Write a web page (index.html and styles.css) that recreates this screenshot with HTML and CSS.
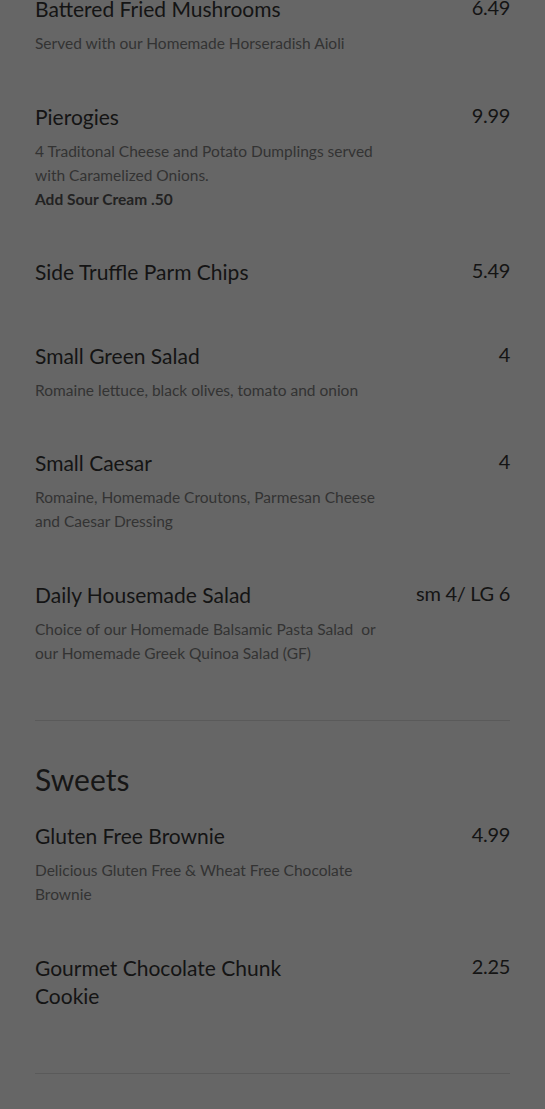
FILE: index.html
```html
<!DOCTYPE html>
<html lang="en">
<head>
  <meta charset="UTF-8">
  <title>Menu</title>
  <meta name="viewport" content="width=device-width, initial-scale=1.0">
  <link rel="stylesheet" href="styles.css">
</head>
<body>
  <div class="menu">
    <section class="section">
      <div class="item">
        <div class="item-main">
          <div class="item-name">Battered Fried Mushrooms</div>
          <div class="item-desc">Served with our Homemade Horseradish Aioli</div>
        </div>
        <div class="item-price">6.49</div>
      </div>
      <div class="item">
        <div class="item-main">
          <div class="item-name">Pierogies</div>
          <div class="item-desc">4 Traditonal Cheese and Potato Dumplings served with Caramelized Onions.<br><strong>Add Sour Cream .50</strong></div>
        </div>
        <div class="item-price">9.99</div>
      </div>
      <div class="item">
        <div class="item-main">
          <div class="item-name">Side Truffle Parm Chips</div>
          <div class="item-desc"></div>
        </div>
        <div class="item-price">5.49</div>
      </div>
      <div class="item">
        <div class="item-main">
          <div class="item-name">Small Green Salad</div>
          <div class="item-desc">Romaine lettuce, black olives, tomato and onion</div>
        </div>
        <div class="item-price">4</div>
      </div>
      <div class="item">
        <div class="item-main">
          <div class="item-name">Small Caesar</div>
          <div class="item-desc">Romaine, Homemade Croutons, Parmesan Cheese and Caesar Dressing</div>
        </div>
        <div class="item-price">4</div>
      </div>
      <div class="item">
        <div class="item-main">
          <div class="item-name">Daily Housemade Salad</div>
          <div class="item-desc">Choice of our Homemade Balsamic Pasta Salad &nbsp;or our Homemade Greek Quinoa Salad (GF)</div>
        </div>
        <div class="item-price">sm 4/ LG 6</div>
      </div>
    </section>

    <section class="section">
      <h2 class="section-title">Sweets</h2>
      <div class="item">
        <div class="item-main">
          <div class="item-name">Gluten Free Brownie</div>
          <div class="item-desc">Delicious Gluten Free &amp; Wheat Free Chocolate Brownie</div>
        </div>
        <div class="item-price">4.99</div>
      </div>
      <div class="item">
        <div class="item-main">
          <div class="item-name">Gourmet Chocolate Chunk Cookie</div>
          <div class="item-desc"></div>
        </div>
        <div class="item-price">2.25</div>
      </div>
    </section>
  </div>
</body>
</html>
```

FILE: styles.css
```css
* { box-sizing: border-box; }
body {
  margin: 0;
  background: #666666;
  font-family: Lato, "Open Sans", sans-serif;
  color: #141414;
}
.menu {
  margin-top: -5px;
  padding: 0 35px;
}
.section {
  padding-bottom: 8px;
  border-bottom: 1px solid #5a5a5a;
}
.section + .section { padding-top: 40px; }
.section-title {
  margin: 0 0 25px;
  font-size: 30px; line-height: 36px; font-weight: 400;
  color: #161616;
}
.item {
  display: flex;
  justify-content: space-between;
  align-items: flex-start;
  margin-bottom: 47.5px;
}
.item-main { flex: 1; }
.item-name {
  max-width: 290px;
  font-size: 21px; line-height: 28px;
}
.item-desc {
  max-width: 343px;
  margin-top: 8px;
  font-size: 15.5px; line-height: 24px;
  color: #333333;
}
.item-desc strong { color: #222222; font-weight: 700; }
.item-price {
  margin-top: -2px;
  font-size: 20px; line-height: 28px;
  letter-spacing: -0.3px;
  text-align: right;
  white-space: nowrap;
}
```
